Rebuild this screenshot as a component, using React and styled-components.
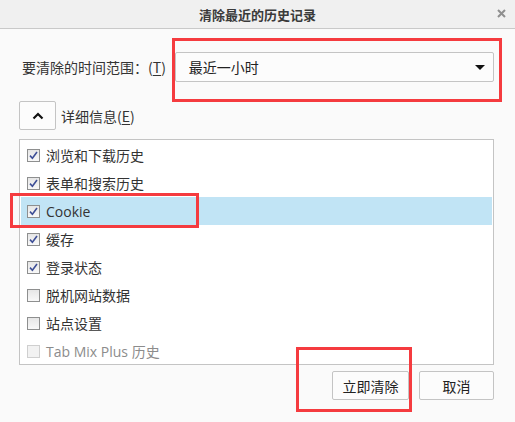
import styled, { createGlobalStyle } from "styled-components";

const GlobalStyle = createGlobalStyle`
  html, body {
    margin: 0;
    padding: 0;
    background: #fafafa;
  }
  body {
    font-family: "Open Sans", "Noto Sans CJK SC", sans-serif;
    color: #333;
  }
`;

const items = [
  { label: "浏览和下载历史", checked: true },
  { label: "表单和搜索历史", checked: true },
  { label: "Cookie", checked: true, selected: true },
  { label: "缓存", checked: true },
  { label: "登录状态", checked: true },
  { label: "脱机网站数据", checked: false },
  { label: "站点设置", checked: false },
  { label: "Tab Mix Plus 历史", checked: false, disabled: true },
];

const App = () => {
  return (
    <>
      <GlobalStyle />
      <Dialog>
        <TitleBar>
          清除最近的历史记录
          <Close>
            <svg width="9" height="9" viewBox="0 0 9 9">
              <path d="M1 1 L8 8 M8 1 L1 8" stroke="#8f8f8f" strokeWidth="2" />
            </svg>
          </Close>
        </TitleBar>
        <Body>
          <RangeRow>
            <Label>
              要清除的时间范围：(<u>T</u>)
            </Label>
            <Select>
              最近一小时
              <Caret />
            </Select>
          </RangeRow>
          <DetailRow>
            <ToggleBtn>
              <svg width="12" height="8" viewBox="0 0 12 8">
                <path d="M1.5 6.5 L6 2 L10.5 6.5" fill="none" stroke="#111" strokeWidth="2.2" />
              </svg>
            </ToggleBtn>
            <Label>
              详细信息(<u>E</u>)
            </Label>
          </DetailRow>
          <List>
            {items.map((item) => (
              <Row key={item.label} $selected={item.selected} $disabled={item.disabled}>
                <Check $checked={item.checked} $disabled={item.disabled}>
                  {item.checked && (
                    <svg width="9" height="9" viewBox="0 0 9 9">
                      <path d="M1 4.6 L3.4 7.2 L8 1" fill="none" stroke="#3d4e96" strokeWidth="1.6" />
                    </svg>
                  )}
                </Check>
                {item.label}
              </Row>
            ))}
          </List>
          <Footer>
            <Button $width={77}>立即清除</Button>
            <Button $width={75}>取消</Button>
          </Footer>
        </Body>
        <Mark style={{ left: 172, top: 38, width: 330, height: 64 }} />
        <Mark style={{ left: 10, top: 193, width: 189, height: 35 }} />
        <Mark style={{ left: 296, top: 347, width: 116, height: 65 }} />
      </Dialog>
    </>
  );
};

export default App;

const Dialog = styled.div`
  position: relative;
  width: 515px;
  height: 422px;
  display: flex;
  flex-direction: column;
  background: #fafafa;
  overflow: hidden;
`;

const TitleBar = styled.div`
  position: relative;
  height: 28px;
  display: flex;
  align-items: center;
  justify-content: center;
  background: #f0f0f0;
  border-bottom: 1px solid #c9c9c9;
  font-family: "Noto Sans CJK SC", sans-serif;
  font-size: 13px;
  font-weight: 700;
  color: #3a3a3a;
`;

const Close = styled.span`
  position: absolute;
  right: 9px;
  top: 9px;
  display: flex;
`;

const Body = styled.div`
  flex: 1;
  display: flex;
  flex-direction: column;
  padding: 23px 21px 0 19px;
`;

const RangeRow = styled.div`
  display: flex;
  align-items: center;
  height: 30px;
`;

const Label = styled.span`
  font-family: "Noto Sans CJK SC", sans-serif;
  font-size: 14px;
  color: #333;
  margin-left: 3px;

  & u {
    text-decoration: underline;
    text-underline-offset: 2px;
  }
`;

const Select = styled.div`
  position: relative;
  margin-left: 9px;
  flex: 1;
  box-sizing: border-box;
  height: 30px;
  display: flex;
  align-items: center;
  padding-left: 13px;
  border: 1px solid #c4c4c4;
  border-radius: 2px;
  background: #fcfcfc;
  font-family: "Noto Sans CJK SC", sans-serif;
  font-size: 14px;
  color: #222;
`;

const Caret = styled.span`
  position: absolute;
  right: 8px;
  top: 12px;
  width: 0;
  height: 0;
  border-left: 5px solid transparent;
  border-right: 5px solid transparent;
  border-top: 5px solid #111;
`;

const DetailRow = styled.div`
  display: flex;
  align-items: center;
  gap: 2px;
  margin-top: 19px;
`;

const ToggleBtn = styled.div`
  width: 37px;
  height: 29px;
  box-sizing: border-box;
  border: 1px solid #c4c4c4;
  border-radius: 2px;
  background: #fcfcfc;
  display: flex;
  align-items: center;
  justify-content: center;
`;

const List = styled.div`
  margin-top: 9px;
  height: 226px;
  box-sizing: border-box;
  border: 1px solid #c4c4c4;
  background: #fff;
  padding: 1px 1px 0;
`;

const Row = styled.div`
  height: 28px;
  display: flex;
  align-items: center;
  padding-left: 6px;
  gap: 6px;
  font-family: "Open Sans", "Noto Sans CJK SC", sans-serif;
  font-size: 14px;
  color: ${(p) => (p.$disabled ? "#8c8c8c" : "#333")};
  background: ${(p) => (p.$selected ? "#c1e4f5" : "transparent")};
`;

const Check = styled.span`
  width: 13px;
  height: 13px;
  box-sizing: border-box;
  border: 1px solid ${(p) => (p.$disabled ? "#cfcfcf" : "#8e8f8f")};
  background: ${(p) => (p.$disabled ? "#f2f2f2" : "linear-gradient(#e6e6e6, #f8f8f8)")};
  display: flex;
  align-items: center;
  justify-content: center;
`;

const Footer = styled.div`
  display: flex;
  justify-content: flex-end;
  gap: 10px;
  margin-top: 6px;
`;

const Button = styled.div`
  width: ${(p) => p.$width}px;
  height: 29px;
  box-sizing: border-box;
  border: 1px solid #c4c4c4;
  border-radius: 2px;
  background: #fcfcfc;
  display: flex;
  align-items: center;
  justify-content: center;
  font-family: "Noto Sans CJK SC", sans-serif;
  font-size: 14px;
  color: #222;
`;

const Mark = styled.div`
  position: absolute;
  box-sizing: border-box;
  border: 3px solid #f53b3f;
  pointer-events: none;
`;
